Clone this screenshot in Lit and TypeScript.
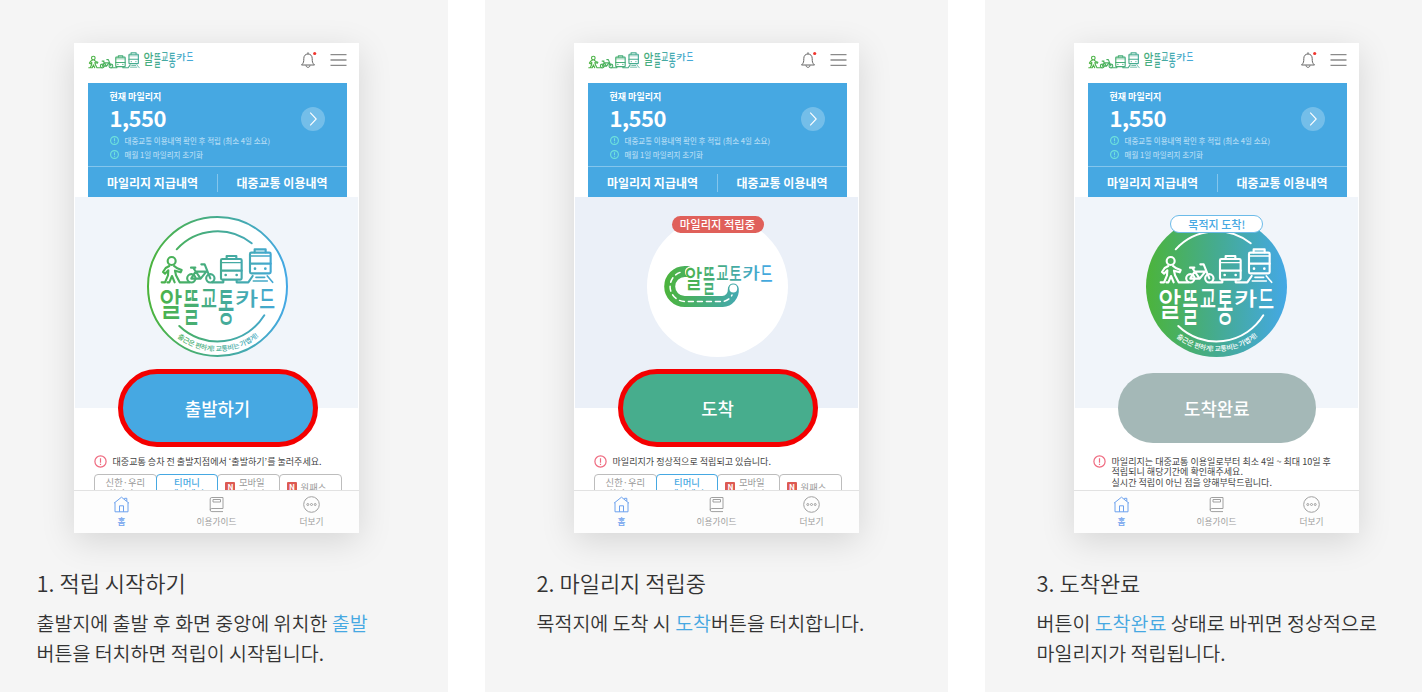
import { LitElement, html, svg, css, nothing } from "lit";
import { customElement, property } from "lit/decorators.js";
import { classMap } from "lit/directives/class-map.js";

type Stage = "start" | "saving" | "done";

// one entry per syllable: ink box inside the emblem,
// fill = ink height per em, drop = ink below the baseline per em
const WORDMARK = [
    { ch: "알", x: 13.6, w: 20.5, h: 28.7, fill: 0.9, drop: 0.08 },
    { ch: "뜰", x: 37.4, w: 14, h: 34.3, fill: 0.9, drop: 0.08 },
    { ch: "교", x: 54.6, w: 14.4, h: 18.6, fill: 0.74, drop: 0.01 },
    { ch: "통", x: 71.8, w: 14.4, h: 34.3, fill: 0.9, drop: 0.08 },
    { ch: "카", x: 89.3, w: 20.6, h: 17.6, fill: 0.9, drop: 0.08 },
    { ch: "드", x: 113, w: 14, h: 18.6, fill: 0.7, drop: -0.02 },
];

const wordmark = (open = false) =>
    WORDMARK.map(({ ch, x, w, h, fill, drop }) => {
        const short = open && ch === "통";
        const height = short ? 18.3 : h;
        const size = height / (short ? 0.74 : fill);
        return svg`<text
            x=${x - w * 0.06}
            y=${74 + height - size * (short ? 0.01 : drop)}
            font-size=${size}
            textLength=${w * 1.13}
            lengthAdjust="spacingAndGlyphs"
        >${short ? "토" : ch}</text>`;
    });

const vehicles = (stroke = 6.4) => svg`
    <g transform="scale(.3333) translate(-261 -48)" fill="none" stroke-width=${stroke} stroke-linecap="round" stroke-linejoin="round">
        <circle cx="335" cy="183" r="12" />
        <path d="M328 198 L317 204 L309 216 L315 221 L325 211 L324 226 L315 247 H305" />
        <path d="M342 198 L352 205 L365 210 L362 217 L345 212 L348 226 L359 247 H388" />
        <path d="M322 247 H328 L336 228 L344 247" />
        <circle cx="394" cy="235" r="12.5" />
        <circle cx="451" cy="235" r="12.5" />
        <path d="M394 235 L407 215 H439 L422 236 H394 M422 236 L400 204 M393 203 H406 M424 193 H434 L451 235" />
        <path d="M456 247 H490 V240 M530 240 V247 H565 L578 228" />
        <rect x="483" y="177" width="62" height="62" rx="4" />
        <path d="M500 176 V168 H529 V176 M483 212 H545" />
        <path d="M484 188 H544" stroke-width="4" />
        <path d="M497 225 h.1 M530 225 h.1" stroke-width="8" />
        <rect x="570" y="158" width="62" height="62" rx="4" />
        <path d="M584 157 V148 H617 V157 M570 191 H632" />
        <path d="M571 168 H631" stroke-width="4" />
        <path d="M585 206 h.1 M616 206 h.1" stroke-width="8" />
        <path d="M622 228 L638 247 M588 232 H614 M580 243 H622" stroke-width="5" />
    </g>`;

const gradient = (id: string, x1 = 0, x2 = 141) => svg`
    <linearGradient id=${id} gradientUnits="userSpaceOnUse" x1=${x1} x2=${x2} y1="0" y2="0">
        <stop offset="0" stop-color="#4cb43a" />
        <stop offset=".5" stop-color="#45ab90" />
        <stop offset="1" stop-color="#44a8e6" />
    </linearGradient>`;

@customElement("round-emblem")
export class RoundEmblem extends LitElement {
    static styles = css`
        :host {
            display: block;
            width: 141px;
            height: 141px;
        }

        svg {
            display: block;
            overflow: visible;
            font-family: "Noto Sans CJK KR", sans-serif;
        }

        .word {
            font-weight: 500;
        }

        .slogan {
            font-size: 6.9px;
            font-weight: 500;
        }
    `;

    @property() stage: Stage = "start";

    private renderRoad() {
        return html`
            <svg width="141" height="141" viewBox="0 0 141 141">
                <defs>${gradient("g", 17, 124)} ${gradient("gw", 4, 126)}</defs>
                <circle cx="70.5" cy="70.5" r="70.5" fill="#fff" />
                <g fill="none" stroke-linecap="round">
                    <path d="M40.5 55.5 H37.7 A15 15 0 0 0 37.7 85.5 H75.5 A11.5 11.5 0 0 0 86.3 73" stroke="url(#g)" stroke-width="11" />
                    <path d="M33 56.4 A15 15 0 0 0 37.7 85.5 H75.5 A11.5 11.5 0 0 0 85 79" stroke="#fff" stroke-width="1.5" stroke-dasharray="5 4" />
                </g>
                <circle cx="43.5" cy="56" r="5.6" fill="#fff" />
                <circle cx="86.3" cy="72.5" r="3.9" fill="#fff" />
                <g class="word" fill="url(#gw)" transform="translate(28.3 -8.6) scale(.76 .8)">
                    ${wordmark(true)}
                </g>
            </svg>
        `;
    }

    render() {
        if (this.stage === "saving") return this.renderRoad();

        const done = this.stage === "done";
        const ink = done ? "#fff" : "url(#g)";
        return html`
            <svg width="141" height="141" viewBox="0 0 141 141">
                <defs>
                    ${gradient("g")} ${gradient("gi", 261, 684)}
                    <path id="arc" d="M10.5 95 A64.8 64.8 0 0 0 130.5 95" />
                </defs>
                <circle
                    cx="70.5"
                    cy="70.5"
                    r=${done ? 70.5 : 69.5}
                    fill=${done ? "url(#g)" : "#fff"}
                    stroke=${done ? "none" : "url(#g)"}
                    stroke-width="2"
                />
                <g fill="none" stroke=${ink} stroke-width="2" stroke-linecap="round">
                    <path d="M29.7 33.3 A55 55 0 0 1 104.7 27.3" />
                    <path d="M32.3 110 A55 55 0 0 0 117.3 99.3" />
                </g>
                <g stroke=${done ? "#fff" : "url(#gi)"}>${vehicles()}</g>
                <g class="word" fill=${ink}>${wordmark()}</g>
                <text class="slogan" fill=${ink} text-anchor="middle">
                    <textPath href="#arc" startOffset="50.5%" textLength="88">출근은 편하게! 교통비는 가볍게!</textPath>
                </text>
            </svg>
        `;
    }
}

@customElement("phone-screen")
export class PhoneScreen extends LitElement {
    static styles = css`
        :host {
            display: flex;
            flex-direction: column;
            box-sizing: border-box;
            width: 285px;
            height: 490px;
            overflow: hidden;
            background: #fff;
            font-family: "Noto Sans CJK KR", sans-serif;
            box-shadow: 0 8px 32px rgba(0, 0, 0, 0.13);
        }

        svg {
            display: block;
            flex: none;
        }

        header {
            display: flex;
            align-items: center;
            height: 40px;
            padding: 0 12px 0 14px;
            flex: none;
            box-sizing: border-box;
        }

        .brand {
            font-weight: 500;
            margin-top: -5px;
            overflow: visible;
        }

        .tools {
            display: flex;
            gap: 13px;
            margin: -7px 0 0 auto;
            align-items: center;
        }

        .panel {
            margin: 0 12px 0 14px;
            height: 114px;
            flex: none;
            background: #46a8e2;
            color: #fff;
            display: flex;
            flex-direction: column;
        }

        .summary {
            display: flex;
            align-items: center;
            height: 83px;
            padding: 0 22px 0 21.5px;
            border-bottom: 1px solid #84c5ec;
        }

        .figures {
            display: flex;
            flex-direction: column;
        }

        .label {
            font-size: 9px;
            line-height: 14px;
            font-weight: 700;
            margin-top: 2px;
        }

        .amount {
            font-size: 22px;
            line-height: 27px;
            margin-bottom: 3px;
            font-weight: 700;
            letter-spacing: -0.55px;
        }

        .note {
            display: flex;
            align-items: center;
            gap: 6px;
            height: 13.7px;
            font-size: 7.5px;
            font-weight: 500;
            color: #b2dbf4;
            white-space: nowrap;
        }

        .go {
            margin: -12px 0 0 auto;
        }

        .links {
            display: grid;
            grid-template-columns: 1fr 1fr;
            flex: 1;
            align-items: center;
            font-size: 12px;
            font-weight: 700;
            text-align: center;
            line-height: 18px;
            padding: 1px 1px 0 0;
        }

        .links span + span {
            border-left: 1px solid #84c5ec;
        }

        .hero {
            position: relative;
            flex: none;
            height: 211px;
            box-sizing: border-box;
            background: #f1f5fa;
            margin: 0 1px;
            padding-left: 2px;
            display: flex;
            flex-direction: column;
            align-items: center;
        }

        .hero.saving {
            background: #ebf0f8;
        }

        .hero.done {
            padding-left: 0.6px;
        }

        round-emblem {
            margin: 18.5px 0 12px;
            flex: none;
        }

        .chip {
            position: absolute;
            top: 18.5px;
            width: 92px;
            height: 17px;
            border-radius: 9px;
            background: #e0605a;
            color: #fff;
            font-size: 11.3px;
            line-height: 16px;
            font-weight: 500;
            text-align: center;
        }

        .done .chip {
            top: 17.5px;
            box-sizing: border-box;
            width: 93px;
            height: 18px;
            border: 1px solid #6cbbe9;
            background: #fff;
            color: #46a8e2;
            font-size: 11px;
        }

        .action {
            flex: none;
            box-sizing: border-box;
            width: 200px;
            height: 78px;
            padding: 0;
            border: 5px solid #f40000;
            border-radius: 39px;
            background: #46a8e2;
            color: #fff;
            font: 500 17.8px/26px "Noto Sans CJK KR", sans-serif;
        }

        .saving .action {
            background: #47ad8d;
        }

        .done .action {
            border: none;
            background: #a4b8b7;
            width: 198px;
            height: 70px;
            margin-top: 4px;
        }

        .foot {
            flex: 1;
            min-height: 0;
            overflow: hidden;
            padding: 47px 18.5px 0 20px;
        }

        .foot.done {
            padding-left: 19px;
        }

        .alert {
            display: flex;
            gap: 5.5px;
            font-size: 9.05px;
            line-height: 10.7px;
            color: #444;
            white-space: nowrap;
        }

        .alert p {
            margin: 1.5px 0 0;
        }

        .tabs {
            display: grid;
            grid-template-columns: repeat(4, 1fr);
            margin-top: 6px;
            font-size: 9.3px;
            line-height: 10.5px;
            color: #999;
            text-align: center;
        }

        .tab {
            display: flex;
            justify-content: center;
            gap: 3.5px;
            height: 30px;
            padding-top: 2px;
            border: 1px solid #bdbdbd;
            border-radius: 4px 4px 0 0;
            margin-right: -1px;
        }

        .tab.on {
            border-color: #46a8e2;
            color: #46a8e2;
            font-weight: 700;
            z-index: 1;
        }

        .tab.fresh {
            padding-right: 7px;
        }

        .tab.low {
            padding-top: 7px;
            height: 25px;
        }

        .new {
            width: 10px;
            height: 12px;
            margin-top: 5px;
            background: #dd5a52;
            border-radius: 1px;
            color: #fff;
            font-size: 8px;
            font-weight: 700;
        }

        .low .new {
            margin-top: 0;
        }

        nav {
            flex: none;
            display: grid;
            grid-template-columns: repeat(3, 1fr);
            height: 43px;
            box-sizing: border-box;
            border-top: 1.5px solid #e2e2e2;
            background: #fdfdfd;
            color: #a0a0a0;
            font-size: 8.7px;
            line-height: 12px;
        }

        nav div {
            display: flex;
            flex-direction: column;
            align-items: center;
            padding-top: 5px;
            gap: 2.5px;
        }

        nav .on {
            color: #6da2ee;
        }

        .on span {
            font-weight: 500;
        }
    `;

    @property() stage: Stage = "start";

    private renderHeader() {
        return html`
            <header>
                <svg class="brand" width="106" height="17" viewBox="0 0 106 17">
                    <defs>
                        ${gradient("gw", -60, 140)} ${gradient("gi", 290, 920)}
                    </defs>
                    <g stroke="url(#gi)" transform="translate(-5.9 -14.4) scale(.455)">${vehicles(7.5)}</g>
                    <g fill="url(#gw)" transform="translate(50.2 -31) scale(.43)">${wordmark()}</g>
                </svg>
                <div class="tools">
                    <svg width="17" height="18" viewBox="0 0 17 18" fill="none" stroke="#666">
                        <path d="M1.5 14 C3.7 12 3.8 10.5 3.8 7.5 C3.8 4.8 5.4 3 8 3 C10.6 3 12.2 4.8 12.2 7.5 C12.2 10.5 12.3 12 14.5 14 Z" stroke-linejoin="round" />
                        <path d="M8 3 V1.3 M6 14.4 C6.2 17 9.8 17 10 14.4" />
                        <circle cx="14.7" cy="2.5" r="1.6" fill="#f0352f" stroke="none" />
                    </svg>
                    <svg width="17" height="14" viewBox="0 0 17 14" stroke="#8a8a8a" stroke-width="1.3">
                        <path d="M.5 1.7 H16.5 M.5 7 H16.5 M.5 12.3 H16.5" />
                    </svg>
                </div>
            </header>
        `;
    }

    private renderNote(text: string) {
        return html`
            <div class="note">
                <svg width="9" height="9" viewBox="0 0 9 9" fill="none" stroke="#6fe3dc" stroke-width="1.1">
                    <circle cx="4.5" cy="4.5" r="3.9" />
                    <path d="M4.5 2.2 V5.2 M4.5 5.9 V6.8" />
                </svg>
                <span>${text}</span>
            </div>
        `;
    }

    private renderPanel() {
        return html`
            <div class="panel">
                <div class="summary">
                    <div class="figures">
                        <span class="label">현재 마일리지</span>
                        <span class="amount">1,550</span>
                        ${this.renderNote("대중교통 이용내역 확인 후 적립 (최소 4일 소요)")}
                        ${this.renderNote("매월 1일 마일리지 초기화")}
                    </div>
                    <svg class="go" width="24" height="24" viewBox="0 0 24 24" fill="none">
                        <circle cx="12" cy="12" r="12" fill="#74bee9" />
                        <path d="M9.2 5.7 L15.2 12 L9.2 18.3" stroke="#fff" stroke-width="1.1" />
                    </svg>
                </div>
                <div class="links">
                    <span>마일리지 지급내역</span>
                    <span>대중교통 이용내역</span>
                </div>
            </div>
        `;
    }

    private renderHero() {
        const actions = { start: "출발하기", saving: "도착", done: "도착완료" };
        const chips = { start: "", saving: "마일리지 적립중", done: "목적지 도착!" };
        const chip = chips[this.stage];
        return html`
            <div class=${classMap({ hero: true, [this.stage]: true })}>
                <round-emblem .stage=${this.stage}></round-emblem>
                ${chip ? html`<span class="chip">${chip}</span>` : nothing}
                <button class="action">${actions[this.stage]}</button>
            </div>
        `;
    }

    private renderFoot() {
        const messages = {
            start: html`대중교통 승차 전 출발지점에서 ‘출발하기’를 눌러주세요.`,
            saving: html`마일리지가 정상적으로 적립되고 있습니다.`,
            done: html`마일리지는 대중교통 이용일로부터 최소 4일 ~ 최대 10일 후<br />적립되니 해당기간에 확인해주세요.<br />실시간 적립이 아닌 점을 양해부탁드립니다.`,
        };
        return html`
            <div class=${classMap({ foot: true, done: this.stage === "done" })}>
                <div class="alert">
                    <svg width="13" height="13" viewBox="0 0 13 13" fill="none" stroke="#ef6b80" stroke-width="1.2">
                        <circle cx="6.5" cy="6.5" r="5.6" />
                        <path d="M6.5 3.3 V7.7 M6.5 8.7 V9.9" />
                    </svg>
                    <p>${messages[this.stage]}</p>
                </div>
                ${this.stage === "done"
                    ? nothing
                    : html`
                          <div class="tabs">
                              <div class="tab"><span>신한·우리<br />하나카드</span></div>
                              <div class="tab on"><span>티머니<br />페이페이</span></div>
                              <div class="tab fresh"><span class="new">N</span><span>모바일<br />캐시비</span></div>
                              <div class="tab fresh low"><span class="new">N</span><span>원패스</span></div>
                          </div>
                      `}
            </div>
        `;
    }

    private renderNav() {
        return html`
            <nav>
                <div class="on">
                    <svg width="17" height="17" viewBox="0 0 17 17" fill="none" stroke="currentColor">
                        <path d="M1 7.2 L8.5 1.2 L16 7.2 M2 6.6 V15.8 H15 V6.6 M6.5 15.8 V9.8 H10.5 V15.8 M11.6 3.4 V2.3 H13.8 V5.2" />
                    </svg>
                    <span>홈</span>
                </div>
                <div>
                    <svg width="17" height="17" viewBox="0 0 17 17" fill="none" stroke="currentColor">
                        <path d="M15 12.5 V1.5 H3.8 Q2.2 1.5 2.2 3 V14 Q2.2 15.6 3.8 15.6 H15 M15 12.5 H3.8 Q2.2 12.5 2.2 14 M5 3.5 H12.5 V6 H5 Z" />
                    </svg>
                    <span>이용가이드</span>
                </div>
                <div>
                    <svg width="17" height="17" viewBox="0 0 17 17" fill="none" stroke="currentColor">
                        <circle cx="8.5" cy="8.5" r="7.8" />
                        <circle cx="4.8" cy="8.5" r="1" />
                        <circle cx="8.5" cy="8.5" r="1" />
                        <circle cx="12.2" cy="8.5" r="1" />
                    </svg>
                    <span>더보기</span>
                </div>
            </nav>
        `;
    }

    render() {
        return html`
            ${this.renderHeader()} ${this.renderPanel()} ${this.renderHero()}
            ${this.renderFoot()} ${this.renderNav()}
        `;
    }
}

@customElement("app-root")
export class AppRoot extends LitElement {
    static styles = css`
        :host {
            display: block;
            width: 1422px;
            height: 692px;
            overflow: hidden;
            background: #fff;
            font-family: "Noto Sans CJK KR", sans-serif;
            color: #333;
        }

        .steps {
            display: grid;
            grid-template-columns: repeat(3, 463px);
            gap: 37px;
            height: 692px;
            margin-left: -15px;
        }

        .step {
            box-sizing: border-box;
            background: #f5f5f5;
            padding: 43px 52px 0 51.5px;
        }

        phone-screen {
            margin: 0 auto 0 37.5px;
        }

        h3 {
            margin: 33px 0 0;
            font-size: 22px;
            line-height: 33px;
            font-weight: 350;
        }

        p {
            margin: 9px 0 0;
            font-size: 19.5px;
            line-height: 30px;
            font-weight: 350;
            white-space: nowrap;
        }

        em {
            font-style: normal;
            color: #46a8e2;
        }
    `;

    render() {
        return html`
            <div class="steps">
                <section class="step">
                    <phone-screen stage="start"></phone-screen>
                    <h3>1. 적립 시작하기</h3>
                    <p>출발지에 출발 후 화면 중앙에 위치한 <em>출발</em><br />버튼을 터치하면 적립이 시작됩니다.</p>
                </section>
                <section class="step">
                    <phone-screen stage="saving"></phone-screen>
                    <h3>2. 마일리지 적립중</h3>
                    <p>목적지에 도착 시 <em>도착</em>버튼을 터치합니다.</p>
                </section>
                <section class="step">
                    <phone-screen stage="done"></phone-screen>
                    <h3>3. 도착완료</h3>
                    <p>버튼이 <em>도착완료</em> 상태로 바뀌면 정상적으로<br />마일리지가 적립됩니다.</p>
                </section>
            </div>
        `;
    }
}
